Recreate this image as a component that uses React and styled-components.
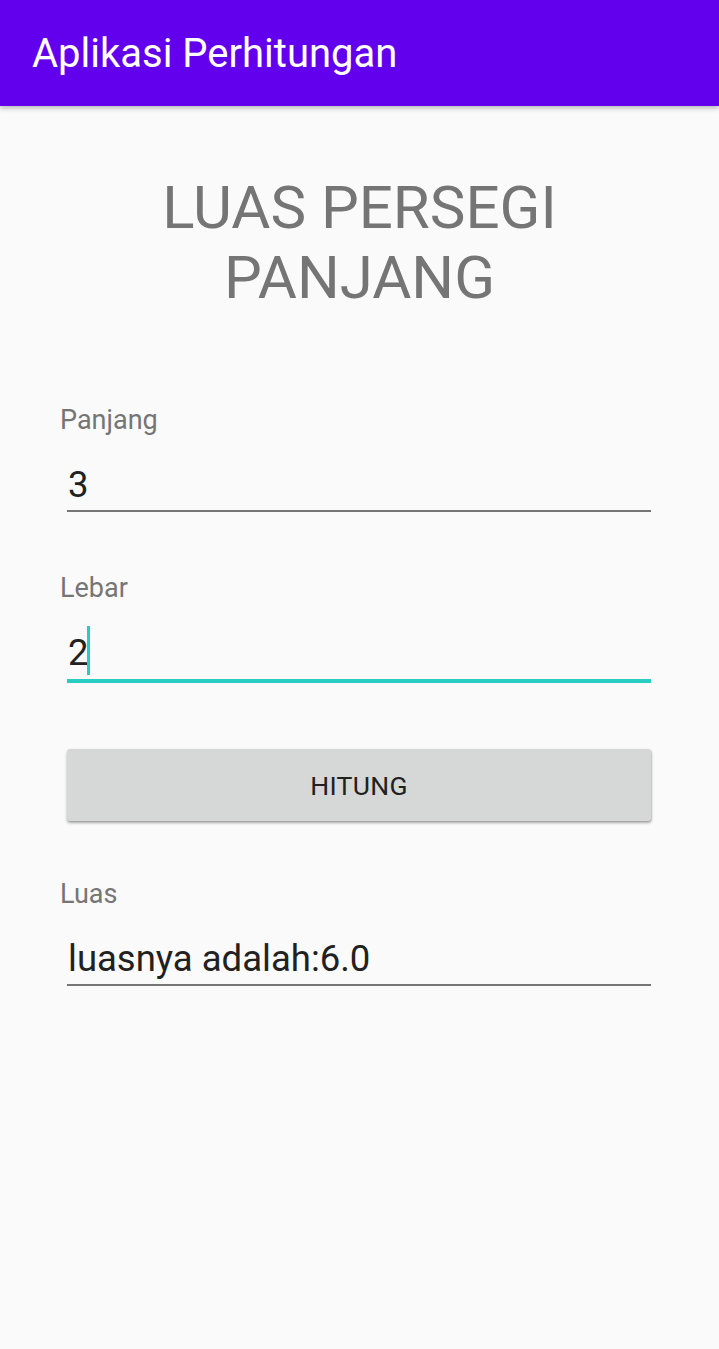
import React from "react";
import styled, { createGlobalStyle } from "styled-components";

const Global = createGlobalStyle`
  html, body { margin: 0; padding: 0; background: #fafafa; }
  body { font-family: Roboto, "Noto Sans", sans-serif; }
  * { box-sizing: border-box; }
`;

const Screen = styled.div`
  width: 719px;
  min-height: 1349px;
  background: #fafafa;
  display: flex;
  flex-direction: column;
`;

const AppBar = styled.header`
  height: 106px;
  background: #6200ee;
  display: flex;
  align-items: center;
  padding: 0 0 0 32px;
  box-shadow: 0 2px 5px rgba(0, 0, 0, 0.28);
  position: relative;
  z-index: 1;
`;

const AppTitle = styled.h1`
  margin: 0;
  font-family: Roboto, sans-serif;
  font-weight: 400;
  font-size: 40px;
  color: #ffffff;
`;

const Content = styled.main`
  display: flex;
  flex-direction: column;
  padding: 67px 68px 0 60px;
`;

const Heading = styled.h2`
  margin: 0 0 92px 8px;
  text-align: center;
  font-family: Roboto, sans-serif;
  font-weight: 400;
  font-size: 60px;
  line-height: 70px;
  color: #757575;
`;

const Field = styled.div`
  display: flex;
  flex-direction: column;
  margin-bottom: ${(p) => p.$gap}px;
`;

const Label = styled.label`
  font-size: 27px;
  line-height: 30px;
  color: #757575;
`;

const InputRow = styled.div`
  margin: 29px 0 0 7px;
  height: ${(p) => (p.$focused ? 51 : 48)}px;
  display: flex;
  align-items: flex-start;
  border-bottom: ${(p) => (p.$focused ? "4px solid #26cdc0" : "2px solid #757575")};
  padding-left: 1px;
`;

const Value = styled.span`
  font-size: 36.5px;
  line-height: 42px;
  color: #212121;
`;

const Cursor = styled.span`
  display: inline-block;
  width: 3px;
  height: 49px;
  background: #26cdc0;
  margin-top: -6px;
  margin-left: -2px;
`;

const Button = styled.button`
  margin: 0 0 58px 7px;
  height: 72px;
  border: none;
  border-radius: 3px;
  background: #d6d7d7;
  box-shadow: 0 2px 3px rgba(0, 0, 0, 0.3), 1px 1px 2px rgba(0, 0, 0, 0.12);
  font-family: Roboto, sans-serif;
  font-size: 26.5px;
  font-weight: 400;
  letter-spacing: 0.3px;
  color: #212121;
  cursor: pointer;
`;

export default function App() {
  return (
    <>
      <Global />
      <Screen>
        <AppBar>
          <AppTitle>Aplikasi Perhitungan</AppTitle>
        </AppBar>
        <Content>
          <Heading>
            LUAS PERSEGI
            <br />
            PANJANG
          </Heading>
          <Field $gap={61}>
            <Label>Panjang</Label>
            <InputRow>
              <Value>3</Value>
            </InputRow>
          </Field>
          <Field $gap={66}>
            <Label>Lebar</Label>
            <InputRow $focused>
              <Value>2</Value>
              <Cursor />
            </InputRow>
          </Field>
          <Button>HITUNG</Button>
          <Field $gap={0}>
            <Label>Luas</Label>
            <InputRow>
              <Value>luasnya adalah:6.0</Value>
            </InputRow>
          </Field>
        </Content>
      </Screen>
    </>
  );
}
